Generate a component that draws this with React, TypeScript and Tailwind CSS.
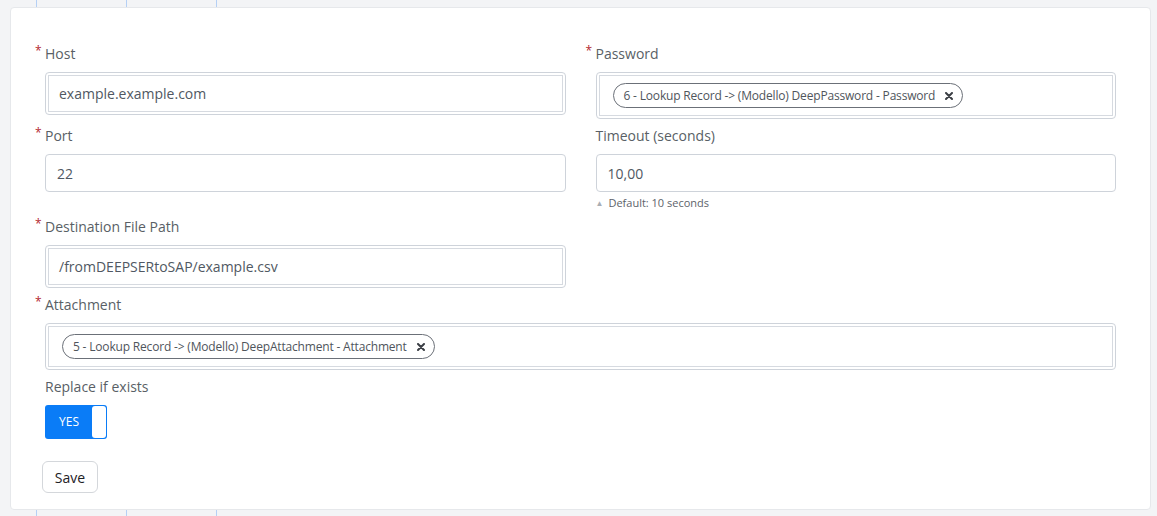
import React from "react";

const font = { fontFamily: '"Open Sans", "Noto Sans", sans-serif' };

function Label({ text, required }: { text: string; required?: boolean }) {
  return (
    <div className="relative h-[20px] text-[14px] leading-[20px] text-[#595f66] mb-[8px]">
      {required && (
        <span className="absolute -left-[10px] top-[-3px] text-[12px] text-[#b3262e]">*</span>
      )}
      {text}
    </div>
  );
}

function DoubleBox({ children, tall }: { children: React.ReactNode; tall?: boolean }) {
  return (
    <div className="rounded-[4px] border border-[#ced3da] bg-white p-[2px]">
      <div
        className={
          "flex items-center border border-[#d6dae0] " +
          (tall ? "h-[41px] pl-[13px]" : "h-[37px] pl-[10px]")
        }
      >
        {children}
      </div>
    </div>
  );
}

function Chip({ text }: { text: string }) {
  return (
    <span className="inline-flex h-[25px] items-center gap-[10px] rounded-full border border-[#6b7078] pl-[10px] pr-[9px] text-[12px] tracking-[-0.18px] text-[#4f555c]">
      {text}
      <svg width="8" height="8" viewBox="0 0 8 8" className="text-[#3b3f45]">
        <path d="M1 1 L7 7 M7 1 L1 7" stroke="currentColor" strokeWidth="2" strokeLinecap="round" />
      </svg>
    </span>
  );
}

function PlainInput({ value }: { value: string }) {
  return (
    <div className="mt-[1px] flex h-[38px] items-center rounded-[4px] border border-[#ced3da] bg-white pl-[11px] text-[14px] text-[#505862]">
      {value}
    </div>
  );
}

function Lines() {
  return (
    <div className="flex h-[7px]">
      <div className="ml-[36px] w-[90px] border-l border-[#b5d0f5]" />
      <div className="w-[90px] border-l border-[#b5d0f5]" />
      <div className="w-[90px] border-l border-[#b5d0f5]" />
    </div>
  );
}

export default function App() {
  return (
    <div className="h-[516px] w-[1157px] overflow-hidden bg-[#f3f4f6]" style={font}>
      <Lines />
      <div className="mx-[10px] h-[503px] w-[1141px] rounded-[4px] border border-[#e6e8eb] bg-white pl-[34px] pr-[34px] pt-[36px]">
        <div className="flex flex-col gap-[7px]">
          <div className="grid grid-cols-2 gap-x-[30px]">
            <div>
              <Label text="Host" required />
              <DoubleBox>
                <span className="text-[14px] text-[#505862]">example.example.com</span>
              </DoubleBox>
            </div>
            <div>
              <Label text="Password" required />
              <DoubleBox tall>
                <Chip text="6 - Lookup Record -> (Modello) DeepPassword - Password" />
              </DoubleBox>
            </div>
          </div>

          <div className="grid grid-cols-2 gap-x-[30px]">
            <div>
              <Label text="Port" required />
              <PlainInput value="22" />
            </div>
            <div>
              <Label text="Timeout (seconds)" />
              <PlainInput value="10,00" />
              <div className="mt-[4px] flex items-center gap-[5px] text-[11px] leading-[14px] text-[#5d636a]">
                <span className="text-[8px] text-[#a9aeb4]">▲</span>
                Default: 10 seconds
              </div>
            </div>
          </div>

          <div className="grid grid-cols-2 gap-x-[30px]">
            <div>
              <Label text="Destination File Path" required />
              <DoubleBox>
                <span className="text-[14px] text-[#505862]">/fromDEEPSERtoSAP/example.csv</span>
              </DoubleBox>
            </div>
          </div>

          <div>
            <Label text="Attachment" required />
            <div className="rounded-[4px] border border-[#ced3da] bg-white p-[2px]">
              <div className="flex h-[41px] items-center border border-[#d6dae0] pl-[13px]">
                <Chip text="5 - Lookup Record -> (Modello) DeepAttachment - Attachment" />
              </div>
            </div>
          </div>

          <div>
            <Label text="Replace if exists" />
            <div className="flex h-[34px] w-[62px] items-center rounded-[3px] bg-[#0a7cf7] p-[1px]">
              <span className="flex-1 text-center text-[12px] text-white">YES</span>
              <span className="h-full w-[14px] rounded-[3px] bg-white" />
            </div>
          </div>

          <div className="pt-[15px]">
            <button className="-ml-[3px] h-[32px] w-[56px] rounded-[6px] border border-[#d4d7db] bg-white text-[14px] text-[#1d2125]">
              Save
            </button>
          </div>
        </div>
      </div>
      <Lines />
    </div>
  );
}
